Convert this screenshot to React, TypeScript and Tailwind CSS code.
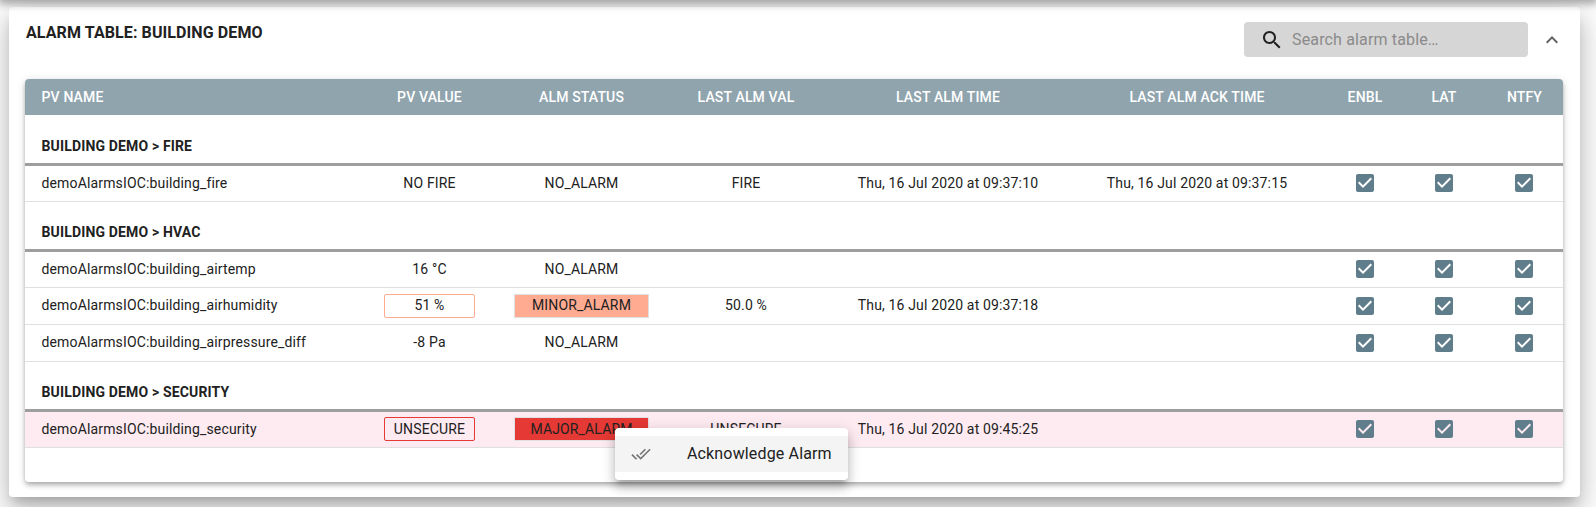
const CHECK = "M19 3H5c-1.11 0-2 .9-2 2v14c0 1.1.89 2 2 2h14c1.11 0 2-.9 2-2V5c0-1.1-.89-2-2-2zm-9 14l-5-5 1.41-1.41L10 14.17l7.59-7.59L19 8l-9 9z";

function Box() {
  return (
    <svg viewBox="0 0 24 24" className="mx-auto block h-6 w-6 fill-[#607d8b]">
      <path d={CHECK} />
    </svg>
  );
}

type Row = {
  name: string;
  value: string;
  status: string;
  last?: string;
  time?: string;
  ack?: string;
  level?: "minor" | "major";
};

const groups: { title: string; rows: Row[] }[] = [
  {
    title: "BUILDING DEMO > FIRE",
    rows: [
      {
        name: "demoAlarmsIOC:building_fire",
        value: "NO FIRE",
        status: "NO_ALARM",
        last: "FIRE",
        time: "Thu, 16 Jul 2020 at 09:37:10",
        ack: "Thu, 16 Jul 2020 at 09:37:15",
      },
    ],
  },
  {
    title: "BUILDING DEMO > HVAC",
    rows: [
      { name: "demoAlarmsIOC:building_airtemp", value: "16 °C", status: "NO_ALARM" },
      {
        name: "demoAlarmsIOC:building_airhumidity",
        value: "51 %",
        status: "MINOR_ALARM",
        last: "50.0 %",
        time: "Thu, 16 Jul 2020 at 09:37:18",
        level: "minor",
      },
      { name: "demoAlarmsIOC:building_airpressure_diff", value: "-8 Pa", status: "NO_ALARM" },
    ],
  },
  {
    title: "BUILDING DEMO > SECURITY",
    rows: [
      {
        name: "demoAlarmsIOC:building_security",
        value: "UNSECURE",
        status: "MAJOR_ALARM",
        last: "UNSECURE",
        time: "Thu, 16 Jul 2020 at 09:45:25",
        level: "major",
      },
    ],
  },
];

function Heads() {
  const labels = ["PV VALUE", "ALM STATUS", "LAST ALM VAL", "LAST ALM TIME", "LAST ALM ACK TIME", "ENBL", "LAT"];
  return (
    <tr className="h-[36px] bg-[#90a4ae] text-white">
      <th className="pl-[16.5px] text-left font-medium">PV NAME</th>
      {labels.map((l) => (
        <th key={l} className="text-center font-medium">{l}</th>
      ))}
      <th className="pl-[2px] text-center font-medium">NTFY</th>
    </tr>
  );
}

function ValueCell({ row }: { row: Row }) {
  if (!row.level) return <>{row.value}</>;
  const border = row.level === "major" ? "border-[#e53935]" : "border-[#ffab91]";
  return (
    <div className={`ml-[24px] flex h-[24px] w-[91px] items-center justify-center rounded-[2px] border ${border}`}>
      {row.value}
    </div>
  );
}

function StatusCell({ row }: { row: Row }) {
  if (!row.level) return <>{row.status}</>;
  const bg = row.level === "major" ? "bg-[#e53935]" : "bg-[#ffab91]";
  return (
    <div className={`mx-auto flex h-[24px] w-[135px] items-center justify-center border border-[#e0e0e0] ${bg}`}>
      {row.status}
    </div>
  );
}

export default function App() {
  return (
    <div className="relative h-[507px] w-[1596px] overflow-hidden bg-white pl-[9px] pt-[7px] font-['Roboto',sans-serif] text-[14px] tracking-[0.15px] text-[#212121]">
      <div className="h-[490px] w-[1571px] rounded-[4px] bg-white px-4 pt-[15px] shadow-[0_8px_10px_-5px_rgba(0,0,0,0.2),0_16px_24px_2px_rgba(0,0,0,0.14),0_6px_30px_5px_rgba(0,0,0,0.12)]">
        <div className="flex h-[57px] items-start justify-between">
          <h2 className="pl-[1px] pt-[2px] text-[16px] font-bold leading-[18px] tracking-[0.1px]">ALARM TABLE: BUILDING DEMO</h2>
          <div className="flex items-center">
            <div className="flex h-[35px] w-[284px] items-center rounded-[4px] bg-[#d6d6d6] pl-[16px]">
              <svg viewBox="0 0 24 24" className="h-6 w-6 fill-[#212121]">
                <path d="M15.5 14h-.79l-.28-.27C15.41 12.59 16 11.11 16 9.5 16 5.91 13.09 3 9.5 3S3 5.91 3 9.5 5.91 16 9.5 16c1.61 0 3.09-.59 4.23-1.57l.27.28v.79l5 4.99L20.49 19l-4.99-5zm-6 0C7.01 14 5 11.99 5 9.5S7.01 5 9.5 5 14 7.01 14 9.5 11.99 14 9.5 14z" />
              </svg>
              <span className="ml-[8px] text-[16px] text-[#8a8a8a]">Search alarm table…</span>
            </div>
            <svg viewBox="0 0 24 24" className="ml-[12px] h-6 w-6 fill-[#616161]">
              <path d="M12 8l-6 6 1.41 1.41L12 10.83l4.59 4.58L18 14z" />
            </svg>
          </div>
        </div>
        <div className="h-[403px] w-[1538px] overflow-hidden rounded-[4px] bg-white shadow-[0_2px_4px_-1px_rgba(0,0,0,0.2),0_4px_5px_0_rgba(0,0,0,0.14),0_1px_10px_0_rgba(0,0,0,0.12)]">
          <table className="w-full table-fixed border-collapse">
            <colgroup>
              <col className="w-[335px]" />
              <col className="w-[139px]" />
              <col className="w-[165px]" />
              <col className="w-[164px]" />
              <col className="w-[240px]" />
              <col className="w-[258px]" />
              <col className="w-[78px]" />
              <col className="w-[80px]" />
              <col className="w-[79px]" />
            </colgroup>
            <thead>
              <Heads />
            </thead>
            {groups.map((g) => (
              <tbody key={g.title}>
                <tr className="h-[49px] border-b-[3px] border-[#9e9e9e]">
                  <td colSpan={9} className="pl-[16.5px] pt-[15px] font-bold">{g.title}</td>
                </tr>
                {g.rows.map((r) => (
                  <tr
                    key={r.name}
                    className={`h-[37px] border-b border-[#e0e0e0] ${r.level === "major" ? "bg-[#feebf1]" : ""}`}
                  >
                    <td className="pl-[16.5px]">{r.name}</td>
                    <td className="text-center"><ValueCell row={r} /></td>
                    <td className="text-center"><StatusCell row={r} /></td>
                    <td className="text-center">{r.last}</td>
                    <td className="text-center">{r.time}</td>
                    <td className="text-center">{r.ack}</td>
                    <td><Box /></td>
                    <td><Box /></td>
                    <td><Box /></td>
                  </tr>
                ))}
              </tbody>
            ))}
          </table>
        </div>
      </div>
      <div className="absolute left-[615px] top-[428px] w-[233px] rounded-[4px] bg-white py-[8px] shadow-[0_5px_5px_-3px_rgba(0,0,0,0.2),0_8px_10px_1px_rgba(0,0,0,0.14),0_3px_14px_2px_rgba(0,0,0,0.12)]">
        <div className="flex h-[36px] items-center bg-[#f4f4f4] pl-[16px] text-[16px] text-[#212121]">
          <svg viewBox="0 0 24 24" className="h-5 w-5 fill-[#757575]">
            <path d="M18 7l-1.41-1.41-6.34 6.34 1.41 1.41L18 7zm4.24-1.41L11.66 16.17 7.48 12l-1.41 1.41L11.66 19l12-12-1.42-1.41zM.41 13.41L6 19l1.41-1.41L1.83 12 .41 13.41z" />
          </svg>
          <span className="ml-[36px]">Acknowledge Alarm</span>
        </div>
      </div>
      <div className="pointer-events-none absolute left-0 top-[-12px] h-[12px] w-full shadow-[0_2px_8px_2px_rgba(0,0,0,0.35)]" />
    </div>
  );
}
